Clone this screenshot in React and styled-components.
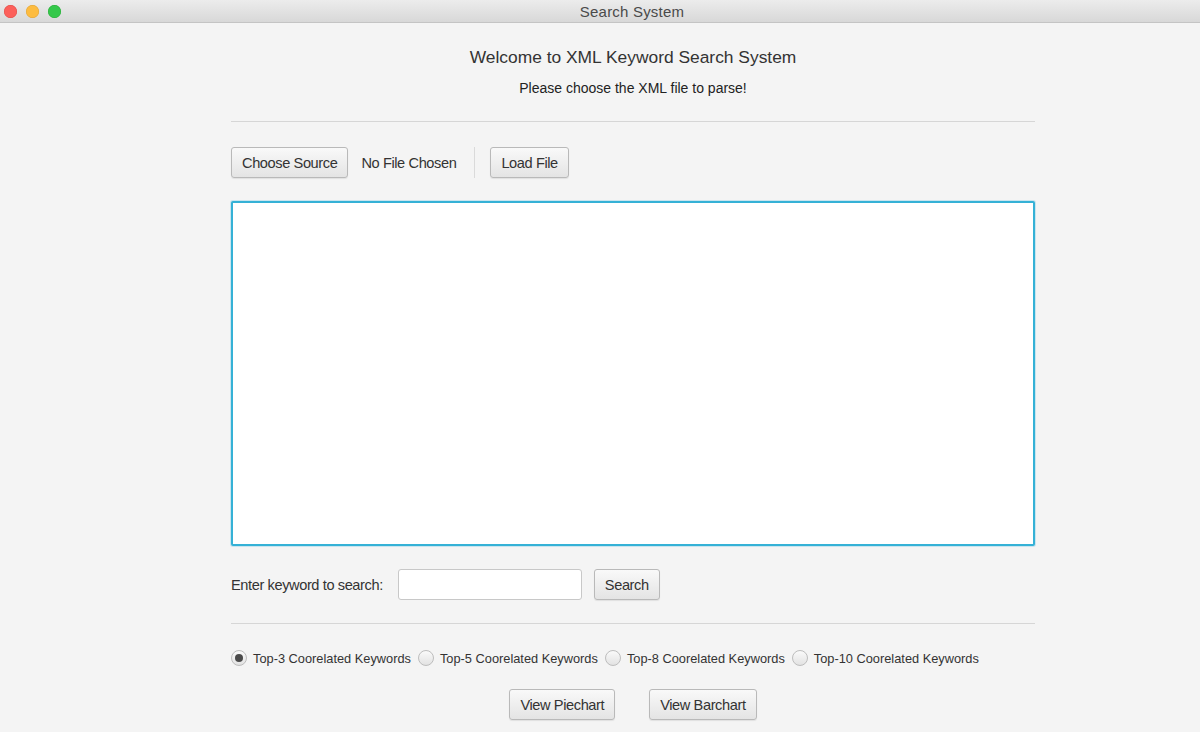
import React from 'react';
import styled, { createGlobalStyle } from 'styled-components';

const GlobalStyle = createGlobalStyle`
  html, body {
    margin: 0;
    padding: 0;
    background: #f4f4f4;
    overflow: hidden;
  }
  body {
    font-family: "Liberation Sans", Arial, sans-serif;
  }
`;

// la fenêtre réelle est plus large que la capture, le centre est à x=632
const Window = styled.div`
  width: 1200px;
  height: 732px;
  overflow: hidden;
  background: #f4f4f4;
  display: flex;
  flex-direction: column;
`;

const TitleBar = styled.div`
  height: 22px;
  border-bottom: 1px solid #c4c4c4;
  background: linear-gradient(to bottom, #ececec, #d8d8d8);
  display: flex;
  align-items: center;
  position: relative;
`;

const Lights = styled.div`
  display: flex;
  gap: 9px;
  padding-left: 4px;
  position: absolute;
  left: 0;
  top: 5px;
`;

const Light = styled.span`
  width: 13px;
  height: 13px;
  border-radius: 50%;
  background: ${p => p.color};
  box-shadow: inset 0 0 0 0.5px ${p => p.edge};
`;

const WindowTitle = styled.div`
  flex: 1;
  padding-left: 64px;
  text-align: center;
  font-size: 15px;
  color: #4a4a4a;
  letter-spacing: 0.2px;
`;

const Content = styled.div`
  width: 804px;
  margin-left: 231px;
  display: flex;
  flex-direction: column;
`;

const Heading = styled.h1`
  margin: 23px 0 0;
  font-size: 17.4px;
  line-height: 22px;
  font-weight: normal;
  color: #333;
  text-align: center;
`;

const SubHeading = styled.p`
  margin: 10px 0 0;
  font-size: 14px;
  line-height: 20px;
  color: #222;
  text-align: center;
`;

const Separator = styled.hr`
  margin: ${p => p.top}px 0 0;
  border: none;
  border-top: 1px solid #d6d6d6;
  height: 0;
`;

const Row = styled.div`
  margin-top: ${p => p.top}px;
  height: ${p => p.h || 31}px;
  display: flex;
  align-items: center;
  justify-content: ${p => p.center ? 'center' : 'flex-start'};
  gap: ${p => p.gap || 0}px;
`;

const Button = styled.button`
  height: 31px;
  padding: 0 ${p => p.pad || 10}px;
  border: 1px solid #b9b9b9;
  border-radius: 3px;
  background: linear-gradient(to bottom, #f9f9f9, #e4e4e4);
  box-shadow: 0 1px 1px rgba(0, 0, 0, 0.08);
  font-family: "Liberation Sans", Arial, sans-serif;
  font-size: 14.6px;
  color: #333;
  letter-spacing: -0.4px;
  margin-left: ${p => p.ml || 0}px;
`;

const Label = styled.span`
  font-size: 14.6px;
  color: #333;
  letter-spacing: -0.4px;
  margin-left: ${p => p.ml || 0}px;
`;

const VDivider = styled.span`
  width: 1px;
  height: 31px;
  background: #dadada;
  margin: 0 15px 0 18px;
`;

const TextArea = styled.textarea`
  margin-top: 23px;
  height: 345px;
  box-sizing: border-box;
  border: 2px solid #35b1d6;
  border-radius: 2px;
  background: #fff;
  resize: none;
  outline: none;
  box-shadow: 0 0 0 1px rgba(120, 200, 230, 0.35);
`;

const Input = styled.input`
  width: 184px;
  height: 31px;
  box-sizing: border-box;
  border: 1px solid #c8c8c8;
  border-radius: 3px;
  background: #fff;
  margin-left: 15px;
  outline: none;
`;

const RadioGroup = styled.div`
  margin-top: 26px;
  height: 16px;
  display: flex;
  align-items: center;
  gap: 7px;
`;

const RadioItem = styled.label`
  display: flex;
  align-items: center;
  gap: 6px;
  font-family: "Liberation Sans", Arial, sans-serif;
  font-size: 12.8px;
  color: #333;
`;

const Circle = styled.span`
  width: 16px;
  height: 16px;
  box-sizing: border-box;
  border-radius: 50%;
  border: 1px solid #bdbdbd;
  background: linear-gradient(to bottom, #fafafa, #e2e2e2);
  display: flex;
  align-items: center;
  justify-content: center;

  &::after {
    content: '';
    width: 8px;
    height: 8px;
    border-radius: 50%;
    background: ${p => p.checked ? '#4a4a4a' : 'transparent'};
  }
`;

const options = [3, 5, 8, 10];

const App = () => {
  return (
    <Window>
      <GlobalStyle />
      <TitleBar>
        <Lights>
          <Light color="#fc605b" edge="#de4a45" />
          <Light color="#fdbc40" edge="#dea235" />
          <Light color="#34c84a" edge="#27aa35" />
        </Lights>
        <WindowTitle>Search System</WindowTitle>
      </TitleBar>
      <Content>
        <Heading>Welcome to XML Keyword Search System</Heading>
        <SubHeading>Please choose the XML file to parse!</SubHeading>
        <Separator top={23} />
        <Row top={25}>
          <Button>Choose Source</Button>
          <Label ml={13}>No File Chosen</Label>
          <VDivider />
          <Button>Load File</Button>
        </Row>
        <TextArea />
        <Row top={23}>
          <Label>Enter keyword to search:</Label>
          <Input />
          <Button ml={12}>Search</Button>
        </Row>
        <Separator top={23} />
        <RadioGroup>
          {options.map(n => (
            <RadioItem key={n}>
              <Circle checked={n === 3} />
              Top-{n} Coorelated Keywords
            </RadioItem>
          ))}
        </RadioGroup>
        <Row top={23} center gap={34}>
          <Button>View Piechart</Button>
          <Button>View Barchart</Button>
        </Row>
      </Content>
    </Window>
  );
};

export default App;
